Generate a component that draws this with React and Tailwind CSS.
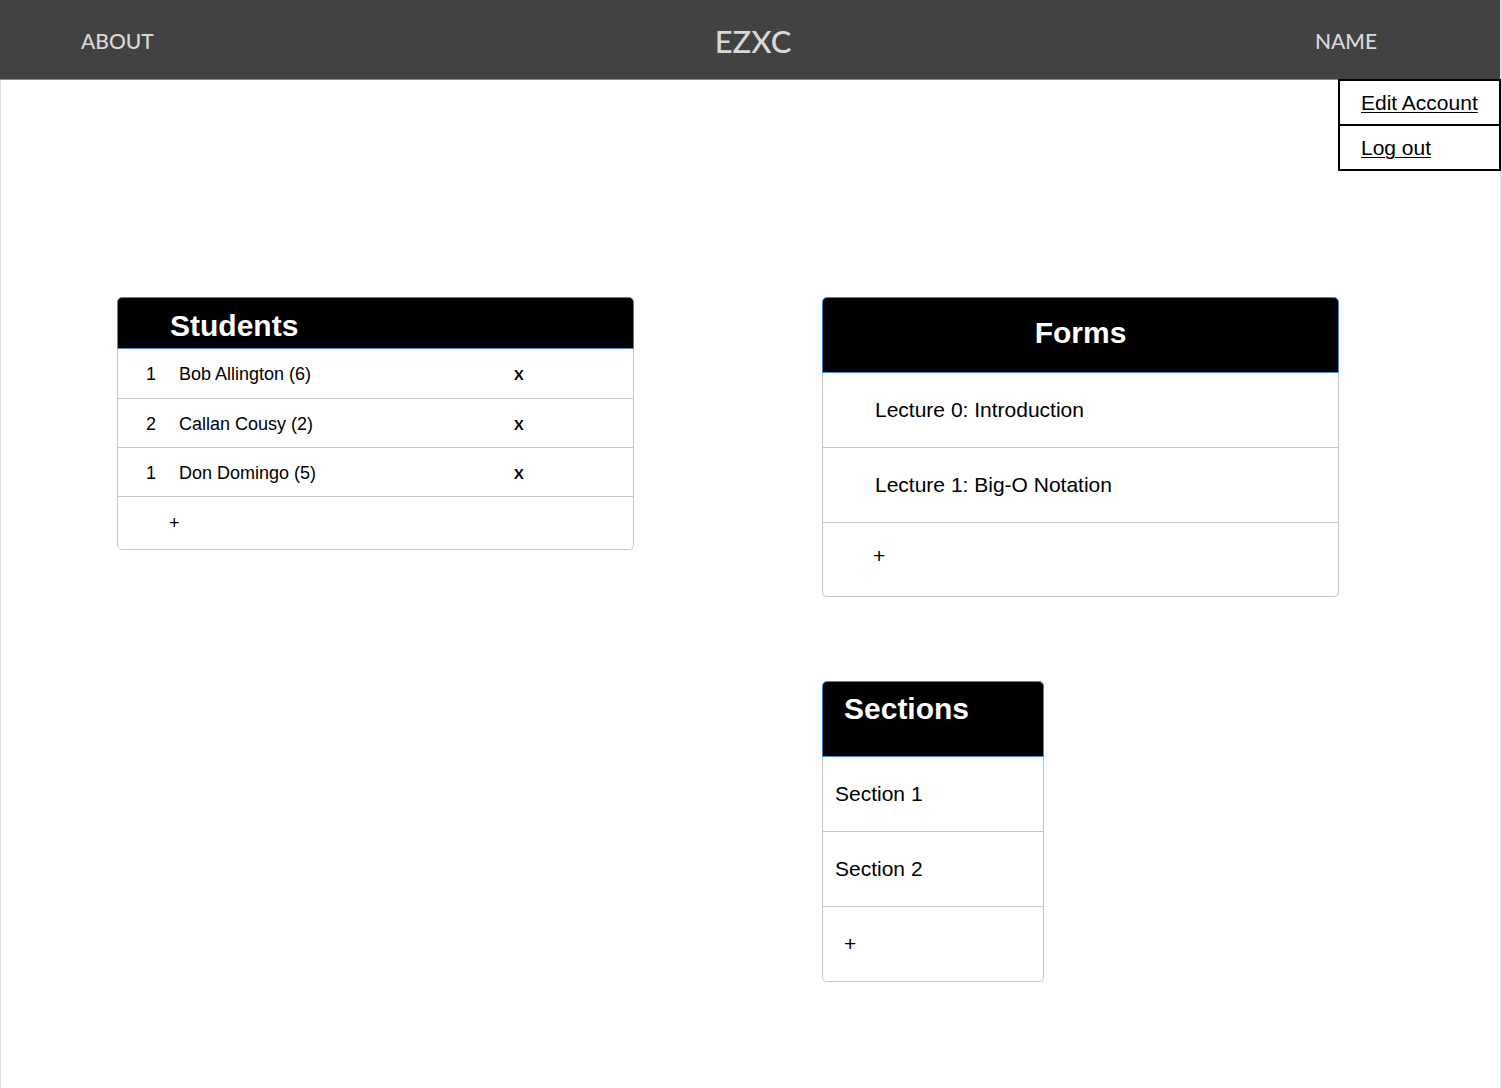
const students = [
  { section: 1, name: "Bob Allington (6)" },
  { section: 2, name: "Callan Cousy (2)" },
  { section: 1, name: "Don Domingo (5)" },
];

const forms = ["Lecture 0: Introduction", "Lecture 1: Big-O Notation"];

const sections = ["Section 1", "Section 2"];

function Header() {
  return (
    <header className="relative flex h-20 items-center border-b border-[#8c8c8c] bg-[#424242] font-['Lato',sans-serif] font-medium text-[#d8d8d8]">
      <nav className="grid w-full grid-cols-3 items-center pt-[3px] pr-[123px] pl-[81px]">
        <a href="#about" className="justify-self-start text-[21px] leading-8">
          ABOUT
        </a>
        <a href="#home" className="ml-12 justify-self-center text-[31px] leading-8">
          EZXC
        </a>
        <button
          type="button"
          aria-expanded="true"
          aria-controls="account-menu"
          className="justify-self-end text-[21px] leading-8"
        >
          NAME
        </button>
      </nav>
      <ul
        id="account-menu"
        className="absolute top-full -right-px z-10 w-[163px] divide-y-2 divide-black border-2 border-black bg-white font-['Liberation_Sans',Arial,sans-serif] text-[21px] leading-[43px] font-normal text-black"
      >
        <li className="pl-[21px]">
          <a href="#edit-account" className="underline decoration-1 underline-offset-2">
            Edit Account
          </a>
        </li>
        <li className="pl-[21px]">
          <a href="#log-out" className="underline decoration-1 underline-offset-2">
            Log out
          </a>
        </li>
      </ul>
    </header>
  );
}

function Students() {
  return (
    <section aria-labelledby="students-title">
      <h2
        id="students-title"
        className="h-[52px] rounded-t-[5px] border border-[#4a86cf] bg-black pl-[52px] text-[30px] leading-[56px] font-bold text-white"
      >
        Students
      </h2>
      <div className="rounded-b-[5px] border-x border-b border-[#c6c6c6]">
        <table
          aria-labelledby="students-title"
          className="w-full table-fixed border-collapse text-[18px] leading-6"
        >
          <colgroup>
            <col className="w-[61px]" />
            <col />
            <col className="w-[119px]" />
          </colgroup>
          <tbody>
            {students.map((student) => (
              <tr key={student.name} className="h-[49px] border-b border-[#c6c6c6]">
                <td className="p-0 pt-0.5 pl-7">{student.section}</td>
                <td className="p-0 pt-0.5">{student.name}</td>
                <td className="p-0">
                  <button
                    type="button"
                    aria-label={`Remove ${student.name}`}
                    className="block font-['Lato',sans-serif] text-[19px] leading-6 font-semibold"
                  >
                    x
                  </button>
                </td>
              </tr>
            ))}
          </tbody>
        </table>
        <button
          type="button"
          aria-label="Add student"
          className="block w-full pl-[51px] text-left text-[18px] leading-[52px]"
        >
          +
        </button>
      </div>
    </section>
  );
}

function CardBody({ children }) {
  return (
    <ul className="divide-y divide-[#c6c6c6] rounded-b-[5px] border-x border-b border-[#c6c6c6] text-[21px] leading-[74px]">
      {children}
    </ul>
  );
}

function Forms() {
  return (
    <section aria-labelledby="forms-title">
      <h2
        id="forms-title"
        className="h-[76px] rounded-t-[5px] border border-[#4a86cf] bg-black text-center text-[30px] leading-[70px] font-bold text-white"
      >
        Forms
      </h2>
      <CardBody>
        {forms.map((form) => (
          <li key={form} className="pl-[52px]">
            <a href="#form">{form}</a>
          </li>
        ))}
        <li>
          <button
            type="button"
            aria-label="Add form"
            className="block w-full pb-2 pl-[50px] text-left leading-[65px]"
          >
            +
          </button>
        </li>
      </CardBody>
    </section>
  );
}

function Sections() {
  return (
    <section aria-labelledby="sections-title" className="w-[222px]">
      <h2
        id="sections-title"
        className="h-[76px] rounded-t-[5px] border border-[#4a86cf] bg-black pl-[21px] text-[30px] leading-[54px] font-bold text-white"
      >
        Sections
      </h2>
      <CardBody>
        {sections.map((section) => (
          <li key={section} className="pl-3">
            <a href="#section">{section}</a>
          </li>
        ))}
        <li>
          <button
            type="button"
            aria-label="Add section"
            className="block w-full pl-[21px] text-left"
          >
            +
          </button>
        </li>
      </CardBody>
    </section>
  );
}

export default function App() {
  return (
    <div className="min-h-screen border-r-2 border-[#dedede] bg-white font-['Liberation_Sans',Arial,sans-serif] text-black">
      <Header />
      <main className="grid grid-cols-2 items-start gap-x-[188px] border-l border-[#dedede] pt-[217px] pr-[161px] pb-[108px] pl-[116px]">
        <Students />
        <div className="flex flex-col gap-[84px]">
          <Forms />
          <Sections />
        </div>
      </main>
    </div>
  );
}
